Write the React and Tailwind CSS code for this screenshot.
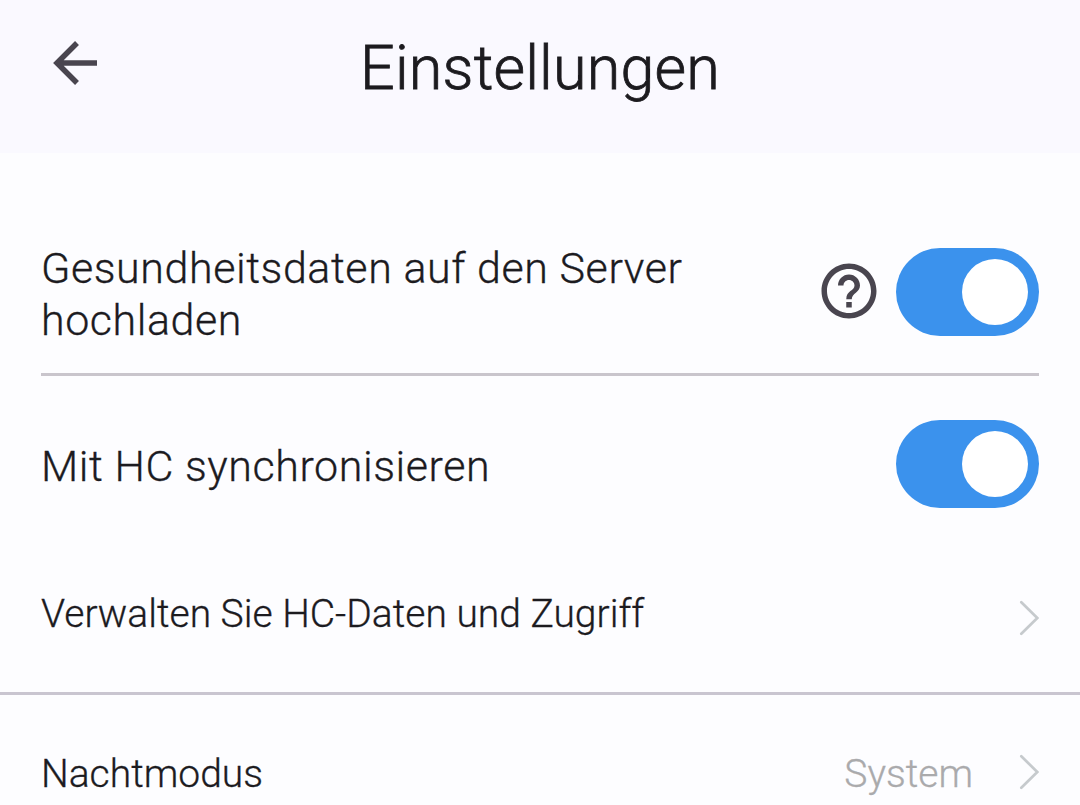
import React, { useState } from "react";

function Toggle({ checked, onChange, label }) {
  return (
    <button
      type="button"
      role="switch"
      aria-checked={checked}
      aria-label={label}
      onClick={() => onChange(!checked)}
      className={`flex h-[88px] w-[143px] shrink-0 items-center rounded-full px-[11px] ${
        checked ? "justify-end bg-[#3b92ed]" : "justify-start bg-[#c9c5d0]"
      }`}
    >
      <span className="size-[66px] rounded-full bg-white" />
    </button>
  );
}

function Chevron() {
  return (
    <svg width="20" height="36" viewBox="0 0 20 36" fill="none" className="shrink-0">
      <path d="M2.3 2.3L18.3 18L2.3 33.7" stroke="#c6cacd" strokeWidth="2.7" strokeLinecap="round" />
    </svg>
  );
}

function BackIcon() {
  return (
    <svg width="44" height="44" viewBox="0 0 44 44" fill="none">
      <path d="M24 2L4 22L24 42M4 22H44" stroke="#49454f" strokeWidth="5.5" />
    </svg>
  );
}

function HelpIcon() {
  return (
    <svg width="66" height="66" viewBox="0 0 24 24" fill="#49454f" className="mb-[2px] shrink-0">
      <path d="M11 18h2v-2h-2v2zm1-16C6.48 2 2 6.48 2 12s4.48 10 10 10 10-4.48 10-10S17.52 2 12 2zm0 18c-4.41 0-8-3.59-8-8s3.59-8 8-8 8 3.59 8 8-3.59 8-8 8zm0-14c-2.21 0-4 1.79-4 4h2c0-1.1.9-2 2-2s2 .9 2 2c0 2-3 1.75-3 5h2c0-2.25 3-2.5 3-5 0-2.21-1.79-4-4-4z" />
    </svg>
  );
}

export default function App() {
  const [upload, setUpload] = useState(true);
  const [sync, setSync] = useState(true);

  return (
    <div className="h-[805px] overflow-hidden bg-[#fdfdff] font-['Roboto',sans-serif] font-light text-[#1c1b1f] [-webkit-text-stroke:0.3px]">
      <header className="grid h-[153px] grid-cols-[97px_1fr_97px] items-start bg-[#faf9ff]">
        <button type="button" aria-label="Zurück" className="mt-[41px] ml-[53px]">
          <BackIcon />
        </button>
        <h1 className="mt-[32px] text-center text-[61px] leading-[72px] tracking-[0.2px] [-webkit-text-stroke:0.8px]">
          Einstellungen
        </h1>
      </header>

      <main>
        <section className="px-[41px]">
          <div className="flex h-[223px] items-center border-b-[3px] border-[#c9c5cc] pt-[57px]">
            <p className="w-[680px] pt-[5px] text-[43px] leading-[52px] tracking-[0.56px]">
              Gesundheitsdaten auf den Server hochladen
            </p>
            <div className="ml-auto flex items-center gap-[14px]">
              <HelpIcon />
              <Toggle checked={upload} onChange={setUpload} label="Gesundheitsdaten hochladen" />
            </div>
          </div>
          <div className="flex h-[176px] items-center justify-between">
            <p className="pt-[3px] text-[43px] leading-[52px] tracking-[0.56px]">
              Mit HC synchronisieren
            </p>
            <Toggle checked={sync} onChange={setSync} label="Mit HC synchronisieren" />
          </div>
        </section>

        <div className="flex h-[143px] items-start justify-between border-b-[3px] border-[#c9c5d0] px-[41px] pt-[39px]">
          <p className="text-[39px] leading-[46px]">Verwalten Sie HC-Daten und Zugriff</p>
          <div className="pt-[9px]">
            <Chevron />
          </div>
        </div>
        <div className="flex h-[154px] items-center px-[41px]">
          <p className="pt-[3px] text-[39px] leading-[46px]">Nachtmodus</p>
          <span className="mr-[46px] ml-auto pt-[3px] text-[39px] leading-[46px] text-[#aaaaac]">
            System
          </span>
          <Chevron />
        </div>
      </main>
    </div>
  );
}
